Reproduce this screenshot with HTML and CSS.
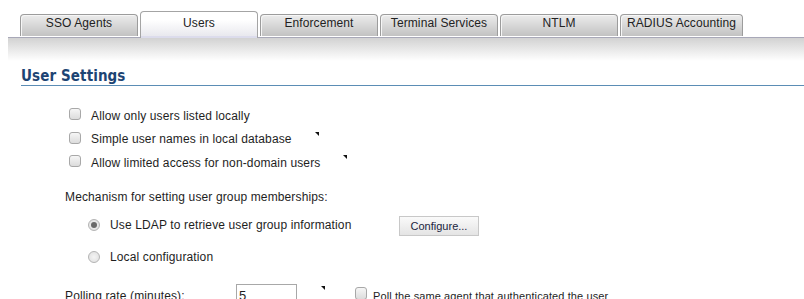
FILE: index.html
```html
<!DOCTYPE html>
<html>
<head>
<meta charset="utf-8">
<link rel="stylesheet" href="styles.css">
</head>
<body>
<div class="tabs">
  <div class="tab">SSO Agents</div>
  <div class="tab active">Users</div>
  <div class="tab">Enforcement</div>
  <div class="tab">Terminal Services</div>
  <div class="tab">NTLM</div>
  <div class="tab">RADIUS Accounting</div>
</div>
<div class="bar"></div>
<h2 class="heading">User Settings</h2>
<div class="checks">
  <div class="row"><span class="cb"></span><span class="lbl">Allow only users listed locally</span></div>
  <div class="row"><span class="cb"></span><span class="lbl">Simple user names in local database</span><span class="hint"></span></div>
  <div class="row"><span class="cb"></span><span class="lbl">Allow limited access for non-domain users</span><span class="hint"></span></div>
</div>
<div class="mech">Mechanism for setting user group memberships:</div>
<div class="radios">
  <div class="rrow"><span class="rb checked"></span><span class="rlbl">Use LDAP to retrieve user group information</span><span class="btn">Configure...</span></div>
  <div class="rrow"><span class="rb"></span><span class="rlbl">Local configuration</span></div>
</div>
<div class="poll">
  <span class="plbl">Polling rate (minutes):</span>
  <span class="input">5</span>
  <span class="hint hint-poll"></span>
  <span class="cb cb-poll"></span>
  <span class="lbl">Poll the same agent that authenticated the user</span>
</div>
</body>
</html>
```
FILE: styles.css
```css
html, body {
  margin: 0;
  padding: 0;
  background: #fff;
  font-family: "Liberation Sans", Arial, sans-serif;
  font-size: 12px;
  color: #1e1e1e;
  overflow: hidden;
}
.tabs {
  display: flex;
  align-items: flex-end;
  gap: 2px;
  padding-left: 20px;
  margin-top: 11px;
  height: 26px;
  position: relative;
  z-index: 1;
}
.tab {
  box-sizing: border-box;
  width: 118px;
  height: 22px;
  margin-bottom: 1px;
  border: 1px solid #9c9c9c;
  border-bottom: none;
  border-radius: 4px 4px 0 0;
  background: linear-gradient(#ececec, #c2c2c2);
  box-shadow: inset 1px 1px 0 #f6f6f6;
  text-align: center;
  line-height: 17px;
  color: #222;
  letter-spacing: 0.1px;
}
.tab:last-child { width: 123px; }
.tab.active {
  height: 27px;
  margin-bottom: -1px;
  line-height: 22px;
  background: linear-gradient(#ffffff 30%, #e6e6ec);
  border-color: #a4a4a4;
  box-shadow: inset 0 -2px 0 #dcdcec;
}
.bar {
  margin-left: 8px;
  height: 23px;
  border-top: 1px solid #a8a8b8;
  background: linear-gradient(#d2d2d2, #ffffff);
}
.heading {
  margin: 6px 0 0 21px;
  font-family: "DejaVu Sans Condensed", "DejaVu Sans", sans-serif;
  font-weight: bold;
  font-size: 15px;
  line-height: 18px;
  color: #1d4473;
  border-bottom: 1px solid #5b8db5;
  padding-bottom: 0;
  letter-spacing: 0.1px;
}
.checks {
  margin: 18px 0 0 69px;
}
.row {
  display: flex;
  align-items: center;
  height: 23.5px;
}
.lbl, .rlbl, .mech, .plbl {
  letter-spacing: 0.13px;
}
.cb {
  box-sizing: border-box;
  width: 12px;
  height: 12px;
  border: 1px solid #a8a8a8;
  border-radius: 3px;
  background: linear-gradient(#f6f6f6, #dcdcdc);
  margin-right: 10px;
  margin-top: -3px;
  flex: none;
}
.hint {
  width: 0;
  height: 0;
  border-top: 4px solid #111;
  border-left: 4px solid transparent;
  margin-left: 23px;
  align-self: flex-start;
  margin-top: 4px;
}
.mech {
  margin: 14px 0 0 65px;
  line-height: 16px;
}
.radios {
  margin: 4px 0 0 88px;
}
.rrow {
  display: flex;
  align-items: center;
  height: 32px;
}
.rb {
  box-sizing: border-box;
  width: 12px;
  height: 12px;
  border-radius: 50%;
  border: 1px solid #b4b4b4;
  background: radial-gradient(#f4f4f4, #dedede);
  margin-right: 10px;
  flex: none;
  position: relative;
}
.rb.checked::after {
  content: "";
  position: absolute;
  left: 2px;
  top: 2px;
  width: 6px;
  height: 6px;
  border-radius: 50%;
  background: #6a6a6a;
}
.rlbl {
  flex: 0 0 289px;
}
.btn {
  box-sizing: border-box;
  width: 80px;
  height: 20px;
  border: 1px solid #c8c8c8;
  background: linear-gradient(#fafafa, #e4e4e4);
  text-align: center;
  line-height: 18px;
  font-size: 11px;
  color: #1a2440;
  margin-top: 2px;
}
.poll {
  display: flex;
  align-items: flex-start;
  margin: 11px 0 0 65px;
}
.plbl {
  flex: 0 0 171px;
  line-height: 18px;
  margin-top: 3px;
}
.input {
  box-sizing: border-box;
  width: 61px;
  height: 22px;
  border: 1px solid #a8a8a8;
  padding-left: 2px;
  padding-top: 2px;
  line-height: 18px;
  font-size: 13px;
  flex: none;
}
.hint-poll {
  margin-left: 24px;
  margin-top: 2px;
}
.cb-poll {
  margin-left: 30px;
  margin-top: 3px;
  margin-right: 6px;
  width: 12px;
  height: 13px;
}
.poll .lbl {
  font-size: 11px;
  line-height: 18px;
  margin-top: 3px;
  letter-spacing: 0.1px;
}
```
